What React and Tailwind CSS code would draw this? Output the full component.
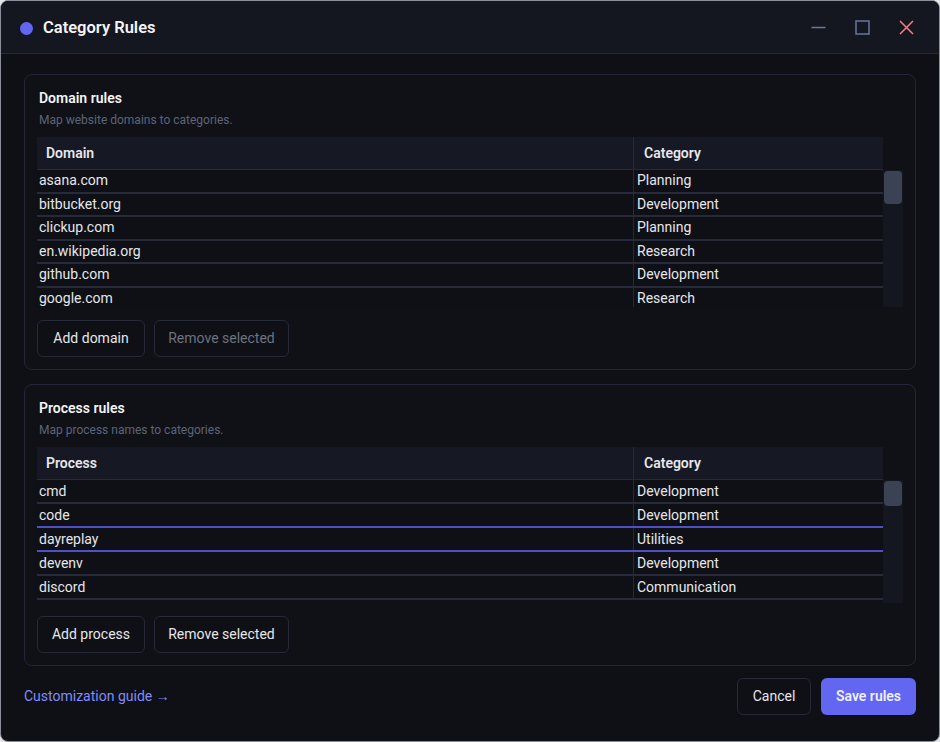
import React from 'react';

const domainRules = [
  { name: 'asana.com', category: 'Planning' },
  { name: 'bitbucket.org', category: 'Development' },
  { name: 'clickup.com', category: 'Planning' },
  { name: 'en.wikipedia.org', category: 'Research' },
  { name: 'github.com', category: 'Development' },
  { name: 'google.com', category: 'Research' },
];

const processRules = [
  { name: 'cmd', category: 'Development' },
  { name: 'code', category: 'Development' },
  { name: 'dayreplay', category: 'Utilities' },
  { name: 'devenv', category: 'Development' },
  { name: 'discord', category: 'Communication' },
];

const RuleTable = ({ label, rows, bodyHeight, rowHeight, thumbHeight, selected }) => (
  <div className="flex flex-col">
    <div className="flex h-[33px]">
      <div className="flex-1 flex bg-[#161823] border-b border-[#262938]">
        <div className="flex-1 flex items-center pl-[9px] text-[14px] font-semibold text-[#e5e7eb]">{label}</div>
        <div className="w-[250px] flex items-center pl-[10px] border-l border-[#262938] text-[14px] font-semibold text-[#e5e7eb]">
          Category
        </div>
      </div>
      <div className="w-[20px]" />
    </div>
    <div className="flex overflow-hidden" style={{ height: bodyHeight }}>
      <div className="flex-1 flex flex-col">
        {rows.map((row, i) => {
          const isSel = i === selected;
          const beforeSel = i === selected - 1;
          return (
            <div
              key={row.name}
              className={`flex shrink-0 border-b-2 bg-[#0f1015] ${isSel || beforeSel ? 'border-[#4f4fc9]' : 'border-[#272a3a]'}`}
              style={{ height: rowHeight }}
            >
              <div className="flex-1 flex items-center pl-[2px] text-[14px] text-[#e5e7eb]">{row.name}</div>
              <div className="w-[250px] flex items-center pl-[3px] border-l border-[#262938] text-[14px] text-[#e5e7eb]">
                {row.category}
              </div>
            </div>
          );
        })}
      </div>
      <div className="w-[20px] bg-[#141620] px-[1px] pt-[1px]">
        <div className="w-full rounded-[4px] bg-[#3a4253]" style={{ height: thumbHeight }} />
      </div>
    </div>
  </div>
);

const Button = ({ children, disabled, width }) => (
  <button
    className={`h-[37px] rounded-[6px] border border-[#262938] bg-[#0f1015] text-[14px] ${disabled ? 'text-[#6b7280]' : 'text-[#e5e7eb]'}`}
    style={{ width }}
  >
    {children}
  </button>
);

const RuleCard = ({ title, subtitle, children, addLabel, addWidth, removeDisabled }) => (
  <div className="rounded-[8px] border border-[#23263a] bg-[#101117] px-3 pt-[13px] pb-3">
    <div className="ml-[2px] text-[14px] font-semibold leading-[20px] text-[#f3f4f6]">{title}</div>
    <div className="ml-[2px] text-[12px] leading-[16px] text-[#5b6478] mt-[4px] mb-[9px]">{subtitle}</div>
    {children}
    <div className="flex gap-[9px] mt-[13px]">
      <Button width={addWidth}>{addLabel}</Button>
      <Button width={135} disabled={removeDisabled}>Remove selected</Button>
    </div>
  </div>
);

export default function App() {
  return (
    <div className="w-[940px] h-[742px] bg-[#e5e7eb] font-['Segoe_UI',Roboto,'Noto_Sans',sans-serif]">
      <div className="w-full h-full rounded-[8px] border border-[#8b8f99] bg-[#0f1015] flex flex-col overflow-hidden">
        <div className="h-[53px] shrink-0 bg-[#151720] border-b border-[#262938] flex items-center pl-[19px] pr-[25px]">
          <div className="w-[13px] h-[13px] rounded-full bg-[#6366f1] mt-[2px]" />
          <div className="ml-[10px] mt-[3px] text-[16.5px] font-semibold text-[#f3f4f6]">Category Rules</div>
          <div className="ml-auto flex items-center gap-[29px]">
            <svg width="15" height="15" viewBox="0 0 15 15">
              <line x1="0.5" y1="7.5" x2="14.5" y2="7.5" stroke="#66779a" strokeWidth="1.3" />
            </svg>
            <svg width="15" height="15" viewBox="0 0 15 15">
              <rect x="1" y="1" width="13" height="13" fill="none" stroke="#66779a" strokeWidth="1.5" />
            </svg>
            <svg width="15" height="15" viewBox="0 0 15 15">
              <path d="M1 1 L14 14 M14 1 L1 14" stroke="#f28080" strokeWidth="1.5" />
            </svg>
          </div>
        </div>

        <div className="flex-1 flex flex-col px-[23px] pt-[20px]">
          <RuleCard
            title="Domain rules"
            subtitle="Map website domains to categories."
            addLabel="Add domain"
            addWidth={108}
            removeDisabled
          >
            <RuleTable label="Domain" rows={domainRules} bodyHeight={137} rowHeight={23.5} thumbHeight={33} selected={-5} />
          </RuleCard>

          <div className="mt-[14px]">
            <RuleCard
              title="Process rules"
              subtitle="Map process names to categories."
              addLabel="Add process"
              addWidth={108}
            >
              <RuleTable label="Process" rows={processRules} bodyHeight={123} rowHeight={24} thumbHeight={25} selected={2} />
            </RuleCard>
          </div>

          <div className="flex items-center mt-[12px]">
            <a className="text-[14px] text-[#818cf8]">Customization guide →</a>
            <div className="ml-auto flex gap-[10px]">
              <button className="h-[37px] w-[74px] rounded-[6px] border border-[#262938] bg-[#0f1015] text-[14px] text-[#e5e7eb]">
                Cancel
              </button>
              <button className="h-[37px] w-[95px] rounded-[6px] bg-[#6366f1] text-[14px] font-semibold text-[#eef0ff]">
                Save rules
              </button>
            </div>
          </div>
        </div>
      </div>
    </div>
  );
}
